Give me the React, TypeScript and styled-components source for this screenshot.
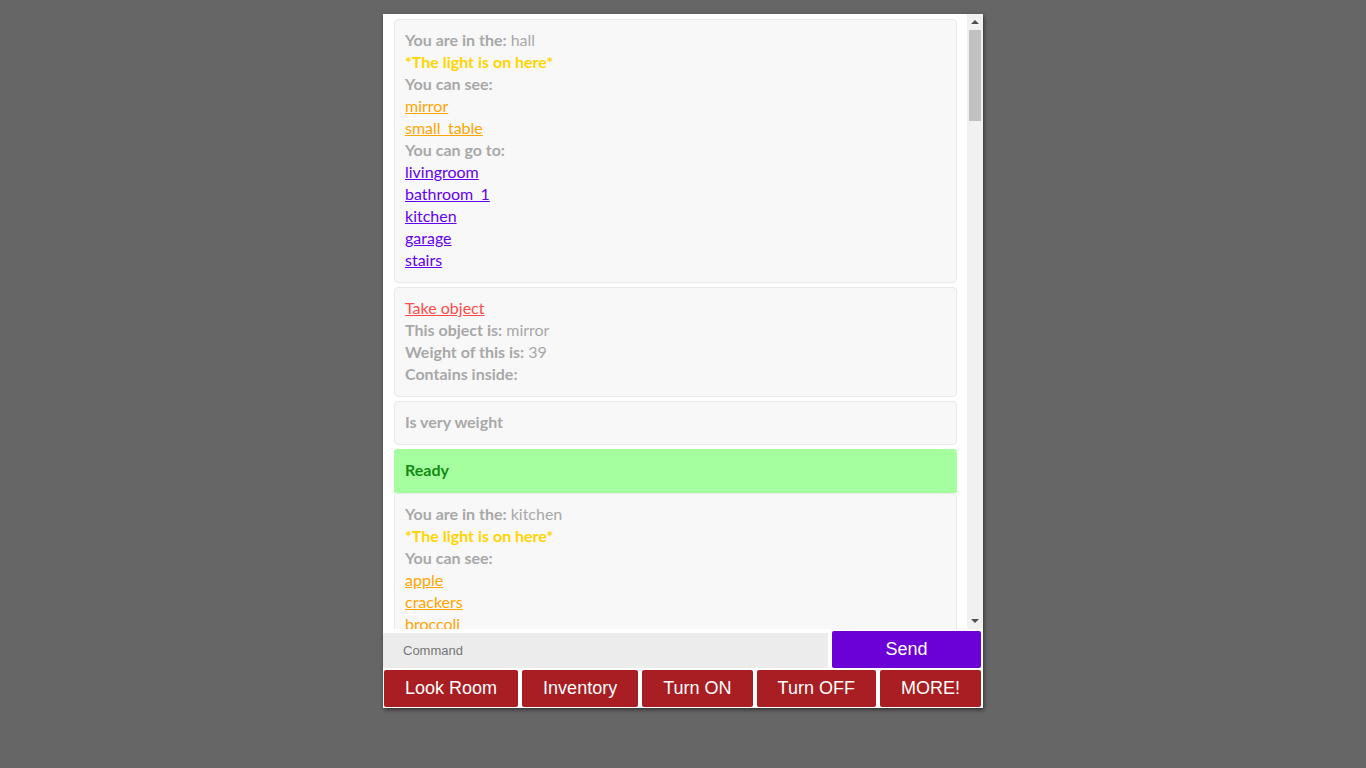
import React from "react";
import styled, { createGlobalStyle } from "styled-components";

const Global = createGlobalStyle`
  html, body { margin: 0; padding: 0; background: #666666; }
  body { font-family: Lato, "Open Sans", sans-serif; }
`;

const Page = styled.div`
  display: flex;
  justify-content: center;
  padding-top: 14px;
  height: 768px;
  box-sizing: border-box;
`;

const Frame = styled.div`
  width: 600px;
  height: 694px;
  background: #ffffff;
  box-shadow: 1px 2px 4px rgba(0, 0, 0, 0.5);
  display: flex;
  flex-direction: column;
`;

const LogArea = styled.div`
  flex: 1;
  min-height: 0;
  display: flex;
`;

const Log = styled.div`
  flex: 1;
  overflow-y: auto;
  scrollbar-width: none;
  &::-webkit-scrollbar { display: none; }
  padding: 5px 10px 0 11px;
  box-sizing: border-box;
  display: flex;
  flex-direction: column;
  gap: 4px;
`;

const ScrollTrack = styled.div`
  width: 16px;
  flex-shrink: 0;
  background: #f1f1f1;
  display: flex;
  flex-direction: column;
`;

const ArrowButton = styled.div`
  height: 16px;
  display: flex;
  align-items: center;
  justify-content: center;
`;

const Arrow = styled.span<{ $dir: "up" | "down" }>`
  width: 0;
  height: 0;
  border-left: 4px solid transparent;
  border-right: 4px solid transparent;
  ${(p) =>
    p.$dir === "up"
      ? "border-bottom: 4px solid #505050;"
      : "border-top: 4px solid #505050;"}
`;

const Thumb = styled.div`
  height: 91px;
  margin: 0 2px 0 2px;
  background: #c1c1c1;
`;

const TrackSpace = styled.div`
  flex: 1;
`;

const Card = styled.div<{ $tone?: "ready" }>`
  background: ${(p) => (p.$tone === "ready" ? "#a6ff9f" : "#f8f8f8")};
  border: 1px solid ${(p) => (p.$tone === "ready" ? "#a6ff9f" : "#e9e9e9")};
  border-radius: ${(p) => (p.$tone === "ready" ? "3px 3px 0 0" : "4px")};
  margin-bottom: ${(p) => (p.$tone === "ready" ? "-4px" : "0")};
  padding: 9px 10px 11px 10px;
  font-size: 16px;
  line-height: 22px;
  color: #a8a8a8;
  flex-shrink: 0;
`;

const Line = styled.div<{ $color?: string; $bold?: boolean }>`
  color: ${(p) => p.$color || "#a8a8a8"};
  font-weight: ${(p) => (p.$bold ? 700 : 400)};
  white-space: nowrap;
`;

const Label = styled.span`
  font-weight: 700;
`;

const Link = styled.a<{ $color: string }>`
  color: ${(p) => p.$color};
  text-decoration: underline;
  cursor: pointer;
`;

const Bottom = styled.div`
  display: flex;
  flex-direction: column;
`;

const InputRow = styled.div`
  display: flex;
  align-items: flex-end;
  gap: 4px;
  padding-right: 2px;
`;

const CommandInput = styled.input`
  flex: 1;
  height: 35px;
  border: none;
  outline: none;
  background: #ececec;
  padding: 0 20px;
  font-family: "Liberation Sans", Arial, sans-serif;
  font-size: 13px;
  color: #333;
  &::placeholder { color: #777; }
`;

const SendButton = styled.button`
  width: 149px;
  height: 37px;
  margin-top: 2px;
  border: none;
  border-radius: 2px;
  background: #6b00d7;
  color: #ffffff;
  font-family: "Liberation Sans", Arial, sans-serif;
  font-size: 18px;
`;

const ActionRow = styled.div`
  display: flex;
  gap: 4px;
  padding: 2px 2px 1px 1px;
`;

const ActionButton = styled.button`
  flex: 1 1 auto;
  height: 37px;
  border: none;
  border-radius: 2px;
  background: #a81e22;
  color: #ffffff;
  font-family: "Liberation Sans", Arial, sans-serif;
  font-size: 18px;
  padding: 0 16px;
  white-space: nowrap;
`;

const ORANGE = "#ffa500";
const PURPLE = "#6400f0";
const GOLD = "#ffd500";
const RED = "#ff4b4b";

function Room({ name, objects, exits }: { name: string; objects: string[]; exits: string[] }) {
  return (
    <Card>
      <Line>
        <Label>You are in the:</Label> {name}
      </Line>
      <Line $color={GOLD} $bold>*The light is on here*</Line>
      <Line $bold>You can see:</Line>
      {objects.map((o) => (
        <Line key={o}>
          <Link $color={ORANGE}>{o}</Link>
        </Line>
      ))}
      {exits.length > 0 && <Line $bold>You can go to:</Line>}
      {exits.map((e) => (
        <Line key={e}>
          <Link $color={PURPLE}>{e}</Link>
        </Line>
      ))}
    </Card>
  );
}

export default function App() {
  return (
    <>
      <Global />
      <Page>
        <Frame>
          <LogArea>
            <Log>
              <Room
                name="hall"
                objects={["mirror", "small_table"]}
                exits={["livingroom", "bathroom_1", "kitchen", "garage", "stairs"]}
              />
              <Card>
                <Line>
                  <Link $color={RED}>Take object</Link>
                </Line>
                <Line>
                  <Label>This object is:</Label> mirror
                </Line>
                <Line>
                  <Label>Weight of this is:</Label> 39
                </Line>
                <Line $bold>Contains inside:</Line>
              </Card>
              <Card>
                <Line $bold>Is very weight</Line>
              </Card>
              <Card $tone="ready">
                <Line $color="#128a12" $bold>Ready</Line>
              </Card>
              <Room
                name="kitchen"
                objects={["apple", "crackers", "broccoli", "fridge", "oven"]}
                exits={["hall", "livingroom"]}
              />
            </Log>
            <ScrollTrack aria-hidden="true">
              <ArrowButton>
                <Arrow $dir="up" />
              </ArrowButton>
              <Thumb />
              <TrackSpace />
              <ArrowButton>
                <Arrow $dir="down" />
              </ArrowButton>
            </ScrollTrack>
          </LogArea>
          <Bottom>
            <InputRow>
              <CommandInput placeholder="Command" />
              <SendButton>Send</SendButton>
            </InputRow>
            <ActionRow>
              <ActionButton>Look Room</ActionButton>
              <ActionButton>Inventory</ActionButton>
              <ActionButton>Turn ON</ActionButton>
              <ActionButton>Turn OFF</ActionButton>
              <ActionButton>MORE!</ActionButton>
            </ActionRow>
          </Bottom>
        </Frame>
      </Page>
    </>
  );
}
